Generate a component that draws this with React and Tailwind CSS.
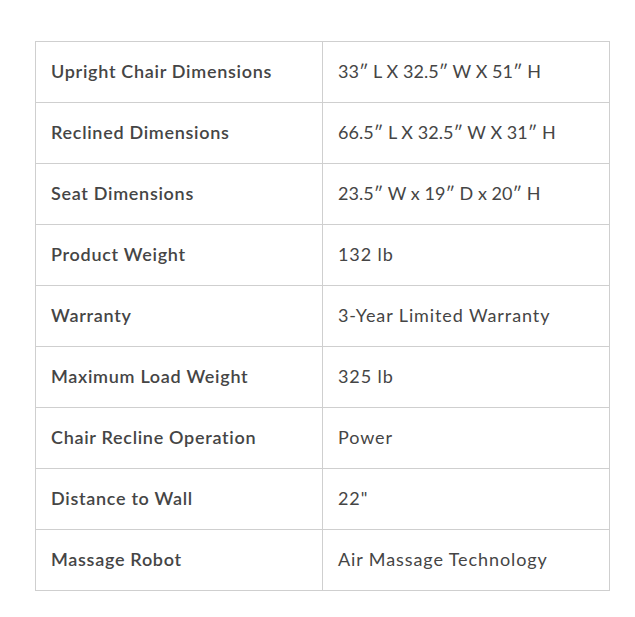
import React from "react";

// dimension strings render tighter in the original, so they skip the extra tracking
const specs = [
  { label: "Upright Chair Dimensions", value: "33″ L X 32.5″ W X 51″ H", tight: true },
  { label: "Reclined Dimensions", value: "66.5″ L X 32.5″ W X 31″ H", tight: true },
  { label: "Seat Dimensions", value: "23.5″ W x 19″ D x 20″ H", tight: true },
  { label: "Product Weight", value: "132 lb" },
  { label: "Warranty", value: "3-Year Limited Warranty" },
  { label: "Maximum Load Weight", value: "325 lb" },
  { label: "Chair Recline Operation", value: "Power" },
  { label: "Distance to Wall", value: "22\"" },
  { label: "Massage Robot", value: "Air Massage Technology" },
];

const App = () => {
  return (
    <div className="w-[635px] h-[617px] bg-white pt-[41px] pl-[35px]">
      <table
        className="w-[575px] border-collapse text-[18px] text-[#454545]"
        style={{ fontFamily: "Lato, 'Noto Sans', sans-serif" }}
      >
        <tbody>
          {specs.map((row) => (
            <tr key={row.label} className="h-[61px]">
              <td className="w-[287px] border border-[#cfcfcf] px-[15px] pb-[2px] font-semibold tracking-[0.7px]">
                {row.label}
              </td>
              <td
                className={`border border-[#cfcfcf] px-[15px] pb-[2px] ${
                  row.tight ? "tracking-[0.05px]" : "tracking-[0.9px]"
                }`}
              >
                {row.value}
              </td>
            </tr>
          ))}
        </tbody>
      </table>
    </div>
  );
};

export default App;
